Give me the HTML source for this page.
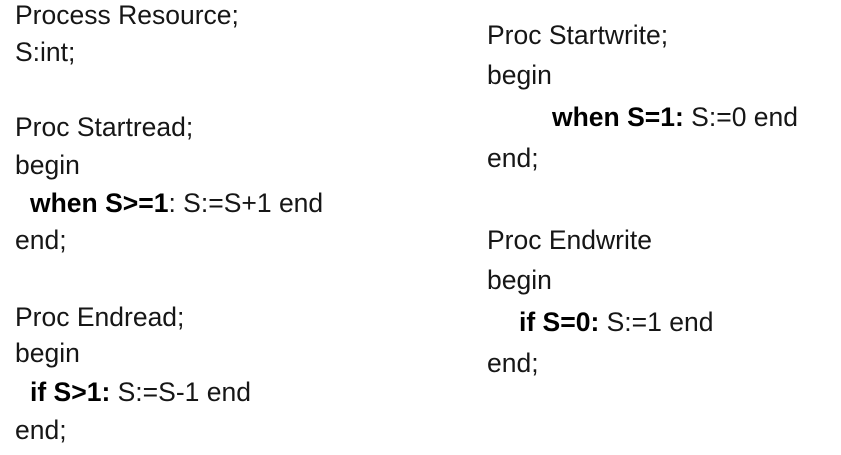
<!DOCTYPE html>
<html><head><meta charset="utf-8"><style>
html,body{margin:0;padding:0;background:#fff;width:841px;height:455px;overflow:hidden}
div{position:absolute;font-family:"Liberation Sans",Arial,sans-serif;font-size:26.5px;line-height:27px;color:#161616;white-space:nowrap}
b{font-weight:bold;color:#000}
</style></head><body>
<div style="left:15px;top:2px">Process Resource;</div>
<div style="left:15px;top:39px">S:int;</div>
<div style="left:15px;top:114px">Proc Startread;</div>
<div style="left:15px;top:152px">begin</div>
<div style="left:30px;top:190px"><b>when S&gt;=1</b>: S:=S+1 end</div>
<div style="left:15px;top:227px">end;</div>
<div style="left:15px;top:304px">Proc Endread;</div>
<div style="left:15px;top:340px">begin</div>
<div style="left:30px;top:379px"><b>if S&gt;1:</b> S:=S-1 end</div>
<div style="left:15px;top:417px">end;</div>

<div style="left:487px;top:22px">Proc Startwrite;</div>
<div style="left:487px;top:62px">begin</div>
<div style="left:552px;top:104px"><b>when S=1:</b> S:=0 end</div>
<div style="left:487px;top:145px">end;</div>
<div style="left:487px;top:227px">Proc Endwrite</div>
<div style="left:487px;top:267px">begin</div>
<div style="left:519px;top:309px"><b>if S=0:</b> S:=1 end</div>
<div style="left:487px;top:350px">end;</div>
</body></html>
